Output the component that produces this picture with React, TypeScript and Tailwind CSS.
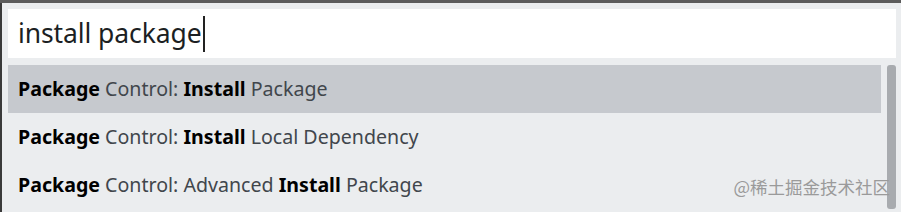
const rows = [
  [["Package", true], [" Control: ", false], ["Install", true], [" Package", false]],
  [["Package", true], [" Control: ", false], ["Install", true], [" Local Dependency", false]],
  [["Package", true], [" Control: Advanced ", false], ["Install", true], [" Package", false]],
] as [string, boolean][][]

export default function App() {
  return (
    <div className="w-[901px] h-[212px] overflow-hidden bg-[#5c5c5c] pt-[3px]">
      <div className="flex h-[209px] border-l-2 border-[#3a3a3a] bg-[#ebedef] font-['Noto_Sans',sans-serif]">
        <div className="flex flex-1 flex-col pl-[6px] pr-[5px] pt-[6px]">
          <div className="flex h-[49px] items-center bg-white pl-[10px] text-[26.5px] text-[#1c1f23]">
            <span className="tracking-[-0.1px]">install package</span>
            <span className="ml-[1px] h-[36px] w-[2px] bg-[#222]" />
          </div>
          <div className="relative mt-[7px] flex">
            <div className="flex-1">
              {rows.map((row, i) => (
                <div
                  key={i}
                  className={`flex h-[48px] items-center whitespace-pre pl-[10px] text-[19.6px] text-[#41464c] ${
                    i === 0 ? 'bg-[#c6c9ce] mr-[6px]' : ''
                  }`}
                >
                  {row.map(([t, b], j) => (
                    <span key={j} className={b ? 'font-bold text-black' : ''}>
                      {t}
                    </span>
                  ))}
                </div>
              ))}
            </div>
            <div className="h-[144px] w-[9px] rounded-[3px] bg-[#a8abaf]" />
            <span className="absolute right-[6px] top-[109px] font-['Noto_Sans_CJK_SC',sans-serif] text-[17.5px] text-[#9a9a9a]">
              @稀土掘金技术社区
            </span>
          </div>
        </div>
      </div>
    </div>
  )
}
